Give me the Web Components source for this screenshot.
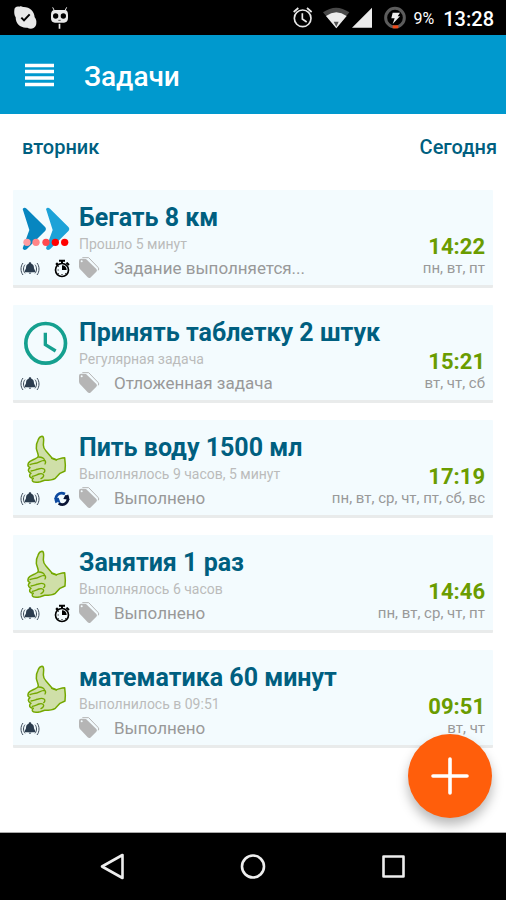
<!DOCTYPE html>
<html lang="ru">
<head>
<meta charset="utf-8">
<meta name="viewport" content="width=device-width, initial-scale=1">
<title>Задачи</title>
<style>
  html, body { height: 100%; margin: 0; }
  body { background: #fff; font-family: Roboto, "Noto Sans", sans-serif; }
</style>
</head>
<body>
<task-app></task-app>

<script>
const define = (name, html, setup) => {
  const template = document.createElement('template');
  template.innerHTML = html;
  customElements.define(name, class extends HTMLElement {
    connectedCallback() {
      if (this.shadowRoot) return;
      this.attachShadow({ mode: 'open' }).append(template.content.cloneNode(true));
      if (setup) setup(this, this.shadowRoot);
    }
  });
};

const thumb = `<svg viewBox="60 60 156 144"><path d="M126 64c4 0 5 5 5 11l-1 15c0 7 3 13 8 18l18 21 13 5c8-2 17-6 25-6l2 22-1 18-15 7-14 15c-9 6-20 6-32 6l-13 4c-10 2-22 2-24-3-1-4 1-6 3-7-7-1-12-4-11-9 0-3 2-5 4-6-4-2-8-4-8-9 0-4 2-6 5-8-4-2-7-5-6-10 1-8 10-12 20-16 7-3 11-4 11-9 0-7-5-15-6-23-1-9 1-17 5-24 2-6 5-11 12-12z" fill="#cfdfa8" stroke="#74a800" stroke-width="4.500" stroke-linejoin="round"/><path d="M116 126c9 0 16 3 18 10-10 0-15 5-24 8-7 2-15 3-20 5M134 136c3 3 3 8 1 11M93 168c7 0 14-4 22-6 6-2 12-3 17 0 4 3 3 8-1 11M97 184c8-1 14-5 20-7 7-2 13-1 14 4 0 4-3 8-8 10M155 130l14 5" fill="none" stroke="#74a800" stroke-width="4" stroke-linecap="round"/></svg>`;
const bigIcons = {
  run: `<svg viewBox="60 78 156 144"><path d="M68 90q5-7 12-1l56 56q4 5 0 10l-56 56q-9 5-12-3l20-55z" fill="#0786c0"/><path d="M138 90q5-7 12-1l56 56q4 5 0 10l-56 56q-9 5-12-3l20-55z" fill="#1da2d8"/><g fill="#f00"><circle cx="81" cy="190" r="11" fill="#ff9ca0"/><circle cx="108" cy="190" r="11" fill="#ff8688"/><circle cx="138" cy="190" r="11" fill="#ff4a4f"/><circle cx="166" cy="190" r="11"/><circle cx="194" cy="190" r="11"/></g></svg>`,
  wait: `<svg viewBox="60 63 156 144"><g fill="none" stroke="#15a08f"><circle cx="137" cy="133" r="59.5" stroke-width="11"/><path d="M136 101v36l31 19" stroke-width="10"/></g></svg>`,
  done: thumb
};
const bell = `<svg viewBox="60 225 60 60" role="img" aria-label="Напоминание"><path d="M90 235c2 0 4 1 4 4 7 2 8 8 8 14l4 9v3H74v-3l4-9c0-6 1-12 8-14 0-3 2-4 4-4zM86 266h8c-1 4-7 4-8 0z" fill="#2b3c4e"/><path d="M75 242c-6 7-6 19 0 26M69 237c-8 10-8 26 0 36M105 242c6 7 6 19 0 26M111 237c8 10 8 26 0 36" fill="none" stroke="#3f4d5c" stroke-width="3"/></svg>`;
const smallIcons = {
  timer: `<svg viewBox="155 243 60 60" role="img" aria-label="Таймер"><circle cx="185" cy="276" r="19.5" fill="none" stroke="#000" stroke-width="5"/><path d="M176 245h18v6h-6v7h-6v-7h-6zM165 258l5-5 5 5-5 5zM196 256l5-4 7 7-4 4zM185 276v-14c8 0 14 6 14 14z"/><path d="M172 276h3M185 288v3M175 286l-2 2M175 266l-2-2M195 286l2 2" stroke="#000" stroke-width="3"/></svg>`,
  repeat: `<svg viewBox="155 225 60 60" role="img" aria-label="Повтор"><g fill="none" stroke-width="8"><path d="M169 266c-9-20 8-34 25-26" stroke="#0d4aa0"/><path d="M200 243c9 20-8 36-25 25" stroke="#0a1535"/></g><path d="M161 253l14-2 6 17-8-3z" fill="#0d4aa0"/><path d="M209 257l-20-2 6-12 6 3z" fill="#0a1535"/></svg>`
};

define('status-bar', `
<style>
  :host { display: flex; align-items: center; height: 35px; padding: 0 12px 0 14px; background: #000; color: #fff; }
  svg { display: block; flex: none; }
  .left { flex: 1; display: flex; gap: 13px; }
  .alarm { margin-right: 9px; }
  .battery { margin: 0 8px 0 10px; }
  .pct { font-size: 16px; line-height: 20px; margin: 2px 9px 0 0; }
  .time { font-size: 20px; line-height: 24px; font-weight: 500; margin-top: 2px; }
</style>
<div class="left">
  <svg width="23" height="24" viewBox="42 18 69 72"><path d="M43 30c0-8 7-12 15-10 3-2 8-1 11 1 20-1 34 13 35 31 4 5 6 11 5 17 0 10-7 17-16 17-4 0-8-1-11-3-21 2-35-12-35-31-4-6-5-14-4-22z" fill="#e8e8e8"/><path d="M64 53l8 8 17-18" fill="none" stroke="#000" stroke-width="6"/></svg>
  <svg width="19" height="24" viewBox="149 18 57 72"><path d="M157 22l5 10M199 22l-5 10" stroke="#e8e8e8" stroke-width="3"/><path d="M163 30h30c7 0 10 6 10 14v10c0 9-5 14-12 14h-27c-8 0-12-5-12-14V44c0-8 4-14 11-14zM175 71h5v15h-5z" fill="#e8e8e8"/><circle cx="166" cy="48" r="8"/><circle cx="189" cy="48" r="8"/><path d="M174 61h7" stroke="#000" stroke-width="2"/></svg>
</div>
<svg class="alarm" width="21" height="24" viewBox="116 18 63 72"><g fill="none" stroke="#e8e8e8" stroke-width="5"><circle cx="148" cy="55" r="25"/><path d="M121 36l14-12M175 36l-14-12M147 40v17l13 9"/></g></svg>
<svg width="28" height="24" viewBox="204 18 84 72"><path d="M207 37q39-28 79 0L247 85z" fill="#484848"/><path d="M216 48q31-22 62 0L247 85z" fill="#ececec"/><path d="M239 65h15l-7 15z" fill="#555"/></svg>
<svg width="24" height="24" viewBox="288 18 72 72"><path d="M354 23v60h-60z" fill="#ececec"/></svg>
<svg class="battery" width="22" height="24" viewBox="390 16 66 72"><circle cx="423" cy="51" r="28" fill="none" stroke="#5c5c5c" stroke-width="9"/><path d="M416 74h17v9h-17z" fill="#f04a18"/><path d="M416 36h22l-7 11h7l-22 23 6-17h-10z" fill="#eee"/></svg>
<span class="pct">9%</span>
<span class="time">13:28</span>
`);

define('app-bar', `
<style>
  :host { display: flex; align-items: center; gap: 25px; height: 79px; padding: 0 20px; background: #0099ce; color: #fff; }
  button { border: 0; padding: 5px; background: none; color: inherit; display: block; }
  svg { display: block; }
  h1 { margin: 4px 0 0; font-size: 28px; line-height: 32px; font-weight: 500; }
</style>
<button type="button" aria-label="Меню"><svg width="29" height="24" viewBox="0 0 29 24"><path d="M0 2.500h29M0 8.500h29M0 15h29M0 21.500h29" stroke="#fff" stroke-width="3.400"/></svg></button>
<h1><slot></slot></h1>
`);

define('day-header', `
<style>
  :host { display: flex; justify-content: space-between; padding: 21px 9px 19px 22px; color: #005f80; font-size: 20px; line-height: 24px; font-weight: 500; }
</style>
<slot name="day"></slot><slot name="relative"></slot>
`);

define('task-card', `
<style>
  :host { display: flex; gap: 7px; padding: 13px 8px 5px 7px; background: #f3fbfe; border-bottom: 3px solid #e9ebeb; border-radius: 1px; color: #999; }
  svg { display: block; flex: none; overflow: visible; }
  .icons { flex: none; width: 52px; }
  .big svg { width: 52px; height: 48px; padding-top: 2px; }
  .small { display: flex; gap: 12px; margin-top: 6px; }
  .small svg { width: 20px; height: 20px; }
  .body { flex: 1; min-width: 0; display: grid; grid-template-columns: 1fr auto; grid-template-rows: 30px 22px 25px; align-items: center; }
  h2 { grid-column: 1 / -1; margin: 0; font-size: 25px; line-height: 30px; font-weight: 700; color: #005f80; }
  .note { font-size: 14px; line-height: 20px; color: #bbb; }
  .time { margin-top: 6px; font-size: 22px; line-height: 22px; font-weight: 700; color: #6a9c00; text-align: right; }
  .state { display: flex; align-items: center; gap: 13px; font-size: 17px; line-height: 24px; }
  .days { font-size: 15px; line-height: 24px; text-align: right; }
</style>
<div class="icons"><div class="big"></div><div class="small"></div></div>
<div class="body">
  <h2><slot></slot></h2>
  <div class="note"><slot name="note"></slot></div>
  <time class="time"><slot name="time"></slot></time>
  <div class="state">
    <svg width="22" height="22" viewBox="237 228 66 66"><path d="M237 239q0-6 6-6l15 1 31 30q4 4 0 8l-18 18q-4 3-8-1l-24-26q-2-3-2-7z" fill="#b5b5b5"/><path d="M247 230l19 0 28 29q4 5 1 9" fill="none" stroke="#b5b5b5" stroke-width="3"/><circle cx="245" cy="241" r="3" fill="#f3fbfe"/></svg>
    <slot name="state"></slot>
  </div>
  <div class="days"><slot name="days"></slot></div>
</div>
`, (host, root) => {
  root.querySelector('.big').innerHTML = bigIcons[host.getAttribute('status')];
  root.querySelector('.small').innerHTML = bell + (smallIcons[host.getAttribute('mode')] || '');
});

define('add-button', `
<style>
  :host { display: block; }
  button { display: grid; place-items: center; width: 84px; height: 84px; padding: 0; border: 0; border-radius: 50%; background: #ff5e0b; box-shadow: 0 7px 12px rgba(0,0,0,.28); }
</style>
<button type="button" aria-label="Добавить задачу"><svg width="38" height="38" viewBox="0 0 38 38"><path d="M19 2v34M2 19h34" stroke="#fff" stroke-width="3.600" stroke-linecap="round"/></svg></button>
`);

define('nav-bar', `
<style>
  :host { display: flex; justify-content: center; align-items: center; gap: 100px; height: 67px; background: #000; border-top: 1px solid #aaa; }
  button { padding: 6px; border: 0; background: none; }
  svg { display: block; fill: none; stroke: #eee; stroke-width: 2.6; stroke-linejoin: round; }
</style>
<button type="button" aria-label="Назад"><svg width="28" height="28" viewBox="0 0 28 28"><path d="M23.500 2v23L3 13.500z"/></svg></button>
<button type="button" aria-label="Домой"><svg width="28" height="28" viewBox="0 0 28 28"><circle cx="14" cy="13.500" r="11"/></svg></button>
<button type="button" aria-label="Недавние"><svg width="28" height="28" viewBox="0 0 28 28"><path d="M4.500 3.500h20v20h-20z"/></svg></button>
`);

define('task-app', `
<style>
  :host { display: flex; flex-direction: column; min-height: 100vh; }
  main { flex: 1; position: relative; }
  .list { display: grid; gap: 17px; padding: 12px 13px 84px; }
  add-button { position: absolute; right: 14px; bottom: 14px; }
</style>
<status-bar></status-bar>
<app-bar>Задачи</app-bar>
<main>
  <day-header><span slot="day">вторник</span><span slot="relative">Сегодня</span></day-header>
  <div class="list">
    <task-card status="run" mode="timer">Бегать 8 км<span slot="note">Прошло 5 минут</span><span slot="time">14:22</span><span slot="state">Задание выполняется...</span><span slot="days">пн, вт, пт</span></task-card>
    <task-card status="wait">Принять таблетку 2 штук<span slot="note">Регулярная задача</span><span slot="time">15:21</span><span slot="state">Отложенная задача</span><span slot="days">вт, чт, сб</span></task-card>
    <task-card status="done" mode="repeat">Пить воду 1500 мл<span slot="note">Выполнялось 9 часов, 5 минут</span><span slot="time">17:19</span><span slot="state">Выполнено</span><span slot="days">пн, вт, ср, чт, пт, сб, вс</span></task-card>
    <task-card status="done" mode="timer">Занятия 1 раз<span slot="note">Выполнялось 6 часов</span><span slot="time">14:46</span><span slot="state">Выполнено</span><span slot="days">пн, вт, ср, чт, пт</span></task-card>
    <task-card status="done">математика 60 минут<span slot="note">Выполнилось в 09:51</span><span slot="time">09:51</span><span slot="state">Выполнено</span><span slot="days">вт, чт</span></task-card>
  </div>
  <add-button></add-button>
</main>
<nav-bar></nav-bar>
`);
</script>
</body>
</html>
